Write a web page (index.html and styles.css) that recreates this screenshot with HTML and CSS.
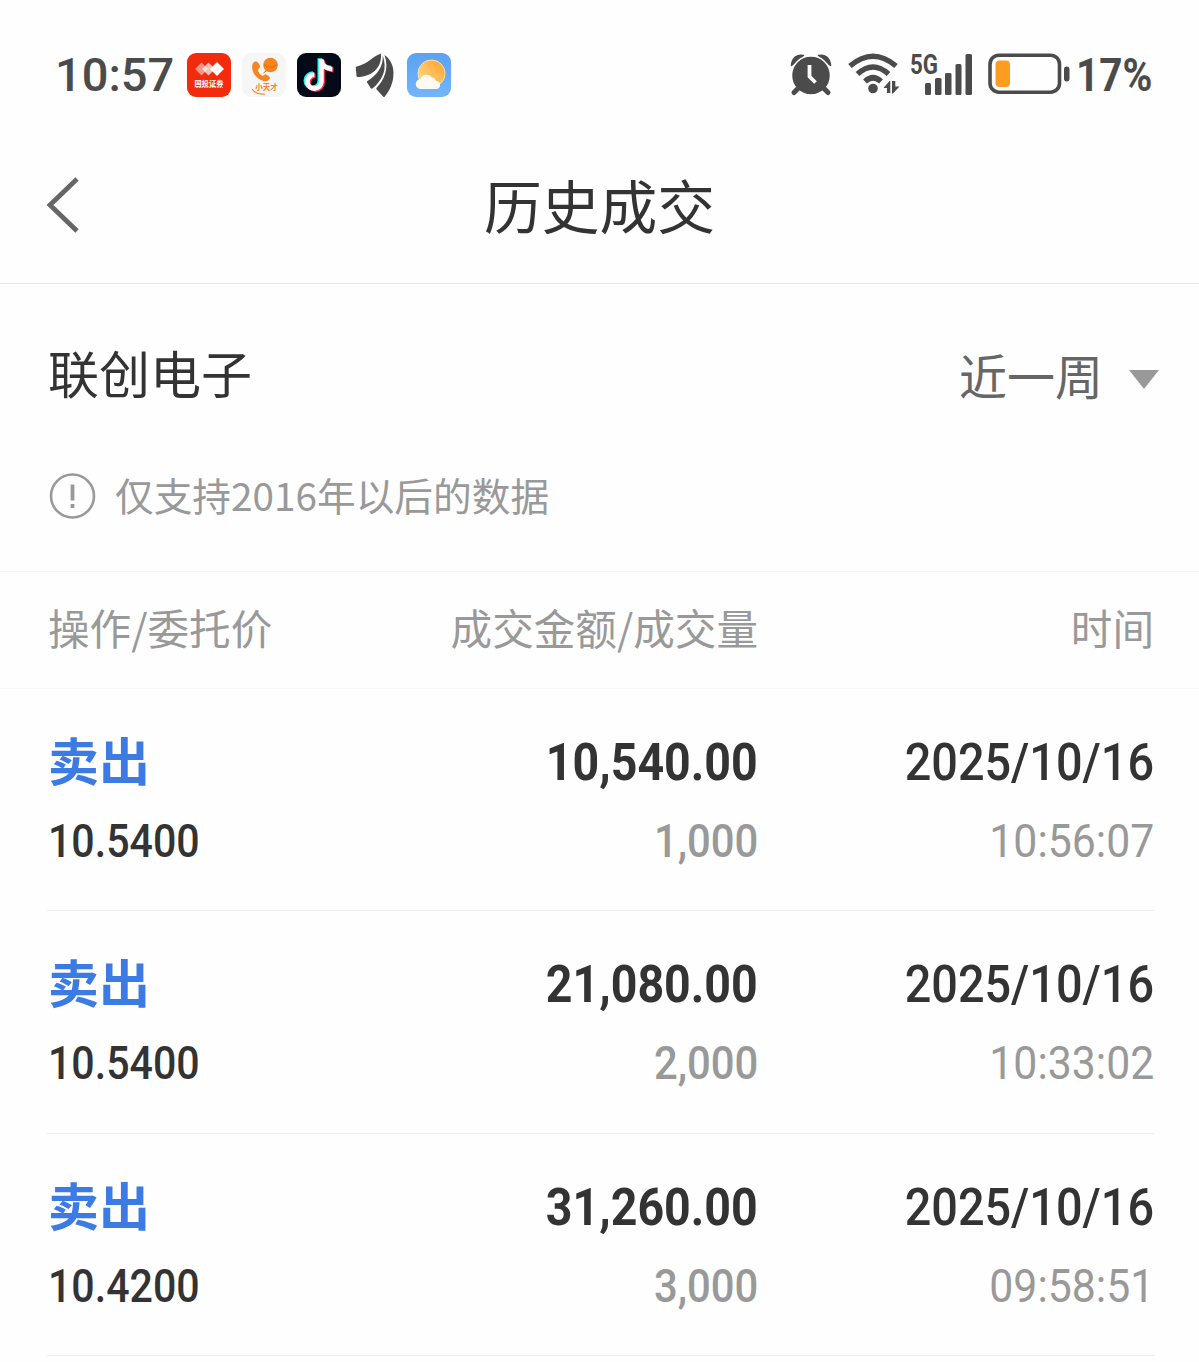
FILE: index.html
```html
<!DOCTYPE html>
<html lang="zh-CN">
<head>
  <meta charset="UTF-8" />
  <meta name="viewport" content="width=device-width, initial-scale=1.0"/>
  <title>历史成交</title>
  <link rel="stylesheet" href="styles.css">
</head>
<body>

  <div class="status-bar">
    <div class="status-left">
      <span class="clock">10:57</span>
      <svg class="app-icon" viewBox="0 0 44 44">
        <rect width="44" height="44" rx="9" fill="#f22b0c"/>
        <path d="M8 16l6.500-6.500 6.500 6.500-6.500 6.500z" fill="#fff" opacity=".5"/>
        <path d="M15 16l6.500-6.500 6.500 6.500-6.500 6.500z" fill="#fff" opacity=".7"/>
        <path d="M23 16l7-7 7 7-7 7z" fill="#fff"/>
        <text x="22" y="32.500" class="icon-text" font-size="7.200" fill="#fff">国投证券</text>
        <path d="M9 34.300h27" stroke="#fff" stroke-width="1" stroke-dasharray="2 .6" opacity=".7"/>
      </svg>
      <svg class="app-icon" viewBox="0 0 44 44">
        <rect width="44" height="44" rx="9" fill="#f6f6f6"/>
        <path d="M11.500 9.500c-4 6 1 16 10 18.500 3 .8 6-.5 6.500-3 .2-1-3.500-4-4.500-3.800-1.200.2-1.500 2-3 1.500-2.500-1-4.500-3.500-4.500-6 0-1.200 2-1.500 2-2.700 0-1.500-1.500-4.500-3-5.200-1.200-.5-2.500-.6-3.500.7z" fill="#f6851f"/>
        <circle cx="28.500" cy="12" r="7.300" fill="#f6851f"/>
        <path d="M22 11.500q6.500 5.500 13 0M21.500 20l4-3" fill="none" stroke="#d96a10" stroke-width="1"/>
        <text x="24.500" y="37" class="icon-text" font-size="7.500" fill="#f6851f">小天才</text>
        <path d="M10 36q4 6 13 5" fill="none" stroke="#f6851f" stroke-width="1.200"/>
      </svg>
      <svg class="app-icon" viewBox="0 0 44 44">
        <rect width="44" height="44" rx="9" fill="#060a18"/>
        <g fill="none" stroke-width="4.800">
          <path d="M24.500 6v22.500a7 7 0 1 1-7-7M24.500 7c.8 5.500 5 8.500 11 9" stroke="#25f0ea" transform="translate(-1.600 -.8)"/>
          <path d="M24.500 6v22.500a7 7 0 1 1-7-7M24.500 7c.8 5.500 5 8.500 11 9" stroke="#fb2c54" transform="translate(1 1.200)"/>
          <path d="M24.500 6v22.500a7 7 0 1 1-7-7M24.500 7c.8 5.500 5 8.500 11 9" stroke="#fff" transform="translate(-.2 .2)"/>
        </g>
      </svg>
      <svg class="app-icon" viewBox="0 0 44 44" fill="#4b4b4b">
        <path d="M29 .5C21 3 16 11 4.800 13.500c-.8.200-1.100.7-1 1.500L4.500 23c.1.800.6 1.200 1.400 1.100C19 23.500 30 16 29 .5z"/>
        <path d="M30.800 2.500C31.500 14 24.500 22.500 15.500 28c-.6.400-.8.900-.4 1.600l3.700 5.700c.5.600 1 .6 1.600.1C31 27 35.500 16 30.800 2.500z"/>
        <path d="M32.500 2c5 14-.500 25-8 33-.4.500-.3 1 .2 1.500l6.600 7.200c.6.600 1 .5 1.500-.2C43 32 46 11 32.500 2z"/>
      </svg>
      <svg class="app-icon" viewBox="0 0 44 44">
        <defs>
          <linearGradient id="sky" x1="0" y1="0" x2="0" y2="1">
            <stop offset="0" stop-color="#5ba2f2"/>
            <stop offset="1" stop-color="#73b5fa"/>
          </linearGradient>
          <linearGradient id="sun" x1="1" y1="0" x2="0" y2="1">
            <stop offset="0" stop-color="#ff9f24"/>
            <stop offset="1" stop-color="#ffdf95"/>
          </linearGradient>
        </defs>
        <rect width="44" height="44" rx="9" fill="url(#sky)"/>
        <circle cx="24.500" cy="20.500" r="13.500" fill="url(#sun)" stroke="#ffe2a4" stroke-width="1"/>
        <path d="M14 36a5 5 0 0 1-.5-10 6.500 6.500 0 0 1 11.500-1.500 5 5 0 0 1 4 3.500 4 4 0 0 1 0 8z" fill="#fffaf2"/>
      </svg>
    </div>

    <div class="status-right">
      <svg class="alarm" viewBox="0 0 42 44">
        <path d="M1.500 12.500C2 5 7 1 13.500 2.500zM40.500 12.500C40 5 35 1 28.500 2.500z" fill="#4b4b4b" stroke="#4b4b4b" stroke-width="1.500" stroke-linejoin="round"/>
        <circle cx="21" cy="22.500" r="19.500" fill="#4b4b4b" stroke="#fefefe" stroke-width="1.500"/>
        <path d="M9 34.500l-5 5M33 34.500l5 5" stroke="#4b4b4b" stroke-width="5" stroke-linecap="round"/>
        <path d="M19.500 12v11.500l6 6" fill="none" stroke="#fff" stroke-width="3.800"/>
      </svg>
      <svg class="wifi" viewBox="0 0 52 44">
        <g fill="none" stroke="#4b4b4b" stroke-width="5.500">
          <path d="M2 13Q25-6.500 48 13"/>
          <path d="M9.500 21Q25 7 40.500 21"/>
          <path d="M17 28.500Q25 21 33 28.500"/>
        </g>
        <circle cx="25" cy="35.500" r="4.800" fill="#4b4b4b"/>
        <path d="M35.500 35l6-7h.8v12h-3.300v-5zM44 28h3.300v5.500h4.200l-6.500 7h-1z" fill="#4b4b4b"/>
      </svg>
      <svg class="signal" viewBox="0 0 64 44">
        <text x="0" y="21" textLength="28" lengthAdjust="spacingAndGlyphs" class="network">5G</text>
        <g fill="#4b4b4b">
          <rect x="15" y="30" width="6" height="12" rx="1.500"/>
          <rect x="25" y="25" width="6.500" height="17" rx="1.500"/>
          <rect x="35" y="20" width="6.500" height="22" rx="1.500"/>
          <rect x="45.500" y="11" width="6" height="31" rx="1.500"/>
          <rect x="55.500" y="1" width="6.500" height="41" rx="1.500"/>
        </g>
      </svg>
      <svg class="battery" viewBox="0 0 82 44">
        <rect x="2" y="2.200" width="69.500" height="37" rx="9" fill="none" stroke="#4b4b4b" stroke-width="3.600"/>
        <rect x="7.500" y="7.500" width="14.500" height="26.500" rx="4" fill="#fd9d20"/>
        <rect x="76" y="13.500" width="5.500" height="15" rx="2.700" fill="#4b4b4b"/>
      </svg>
      <span class="percent">17%</span>
    </div>
  </div>

  <header>
    <svg class="back" viewBox="0 0 32 56">
      <path d="M30 2L3 28l27 26" fill="none" stroke="#666" stroke-width="4.800"/>
    </svg>
    <h1>历史成交</h1>
  </header>

  <section class="filter">
    <div class="filter-row">
      <h2>联创电子</h2>
      <div class="period">
        <span>近一周</span>
        <i class="arrow"></i>
      </div>
    </div>
    <div class="tip">
      <svg viewBox="0 0 46 46">
        <circle cx="23" cy="23" r="21.500" fill="none" stroke="#999" stroke-width="2.600"/>
        <path d="M23 11.500v16M23 31v4" stroke="#999" stroke-width="3.800"/>
      </svg>
      <p>仅支持2016年以后的数据</p>
    </div>
  </section>

  <div class="table-head">
    <span>操作/委托价</span>
    <span>成交金额/成交量</span>
    <span>时间</span>
  </div>

  <ul class="deals">
    <li>
      <div class="col">
        <b class="side">卖出</b>
        <span class="cost">10.5400</span>
      </div>
      <div class="col">
        <span class="amount">10,540.00</span>
        <span class="volume">1,000</span>
      </div>
      <div class="col">
        <span class="date">2025/10/16</span>
        <span class="time">10:56:07</span>
      </div>
    </li>
    <li>
      <div class="col">
        <b class="side">卖出</b>
        <span class="cost">10.5400</span>
      </div>
      <div class="col">
        <span class="amount">21,080.00</span>
        <span class="volume">2,000</span>
      </div>
      <div class="col">
        <span class="date">2025/10/16</span>
        <span class="time">10:33:02</span>
      </div>
    </li>
    <li>
      <div class="col">
        <b class="side">卖出</b>
        <span class="cost">10.4200</span>
      </div>
      <div class="col">
        <span class="amount">31,260.00</span>
        <span class="volume">3,000</span>
      </div>
      <div class="col">
        <span class="date">2025/10/16</span>
        <span class="time">09:58:51</span>
      </div>
    </li>
  </ul>

</body>
</html>
```
FILE: styles.css
```css
* {
  box-sizing: border-box;
}

body {
  margin: 0;
  padding: 0;
  height: 1362px;
  overflow: hidden;
  font-family: "Noto Sans CJK SC", sans-serif;
  background-color: #fefefe;
  color: #333;
}

h1, h2, p, ul {
  margin: 0;
  padding: 0;
  font-weight: 400;
}

svg {
  display: block;
  flex: none;
  overflow: visible;
}

/* status bar */
.status-bar {
  display: flex;
  justify-content: space-between;
  height: 130px;
  padding: 53px 48px 0 55px;
  font-family: Roboto, sans-serif;
  color: #4b4b4b;
}

.status-left,
.status-right {
  display: flex;
  height: 44px;
  align-items: center;
}

.status-left {
  gap: 11px;
}

.clock {
  width: 121px;
  font-size: 47px;
  font-weight: 500;
  line-height: 44px;
}

.app-icon {
  width: 44px;
  height: 44px;
}

.icon-text {
  font-family: "Noto Sans CJK SC", sans-serif;
  font-weight: 700;
  text-anchor: middle;
}

.alarm {
  width: 42px;
  height: 44px;
  margin-right: 16px;
}

.wifi {
  width: 52px;
  height: 44px;
  margin-right: 10px;
}

.network {
  font-family: Roboto, sans-serif;
  font-size: 27px;
  font-weight: 700;
  fill: #4b4b4b;
}

.signal {
  width: 64px;
  height: 44px;
  margin-right: 14px;
}

.battery {
  width: 82px;
  height: 44px;
  margin-right: 6px;
}

.percent {
  width: 75px;
  font-size: 46px;
  font-weight: 700;
  line-height: 44px;
  transform: scaleX(0.88);
  transform-origin: left;
}

/* title */
header {
  display: grid;
  grid-template-columns: 32px 1fr 32px;
  align-items: center;
  height: 154px;
  padding: 0 47px;
  border-bottom: 1px solid #e6e6e6;
}

.back {
  width: 32px;
  height: 56px;
  margin-bottom: 3px;
}

h1 {
  padding-bottom: 6px;
  font-size: 57.8px;
  line-height: 80px;
  text-align: center;
}

/* stock and period */
.filter {
  height: 288px;
  padding: 50px 40px 0 48px;
  border-bottom: 1px solid #f3f3f3;
}

.filter-row {
  display: flex;
  justify-content: space-between;
  align-items: center;
}

h2 {
  font-size: 51px;
  line-height: 76px;
}

.period {
  display: flex;
  align-items: center;
  gap: 26px;
  padding-top: 4px;
  font-size: 48px;
  line-height: 70px;
  color: #666;
}

.arrow {
  margin-top: 11px;
  border: 15.5px solid transparent;
  border-top: 19px solid #999;
  border-bottom: 0;
}

.tip {
  display: flex;
  align-items: center;
  gap: 18px;
  margin-top: 56px;
  font-size: 38.7px;
  line-height: 56px;
  color: #999;
}

.tip svg {
  width: 49px;
  height: 46px;
}

.tip p {
  padding-bottom: 3px;
}

/* table */
.table-head,
.deals li {
  display: grid;
  grid-template-columns: 310px 400px 396px;
}

.table-head {
  height: 117px;
  padding: 25px 48px 0;
  border-bottom: 1px solid #f7f7f7;
  font-size: 41.6px;
  line-height: 60px;
  color: #999;
}

.table-head span:not(:first-child) {
  text-align: right;
}

.deals {
  list-style: none;
}

.deals li {
  height: 222.3px;
  margin: 0 45px 0 47px;
  padding: 35px 0 0 1px;
  border-bottom: 1px solid #eee;
}

.col {
  display: flex;
  flex-direction: column;
  align-items: flex-end;
  font-family: Roboto, sans-serif;
  font-size: 47px;
  line-height: 78px;
  white-space: nowrap;
}

.col:first-child {
  align-items: flex-start;
}

/* narrow digits */
.col span {
  transform: scaleX(0.89);
  transform-origin: right;
}

.side {
  height: 78px;
  font-family: "Noto Sans CJK SC", sans-serif;
  font-size: 51px;
  line-height: 70px;
  color: #3c7ae4;
}

.col .cost {
  font-weight: 500;
  transform: scaleX(0.875);
  transform-origin: left;
}

.col .amount {
  font-size: 52px;
  font-weight: 700;
  transform: scaleX(0.895);
}

.col .date {
  font-size: 52px;
  font-weight: 500;
  transform: scaleX(0.9);
}

.volume {
  font-weight: 500;
  color: #999;
}

.col .time {
  color: #999;
  transform: scaleX(0.91);
}
```
